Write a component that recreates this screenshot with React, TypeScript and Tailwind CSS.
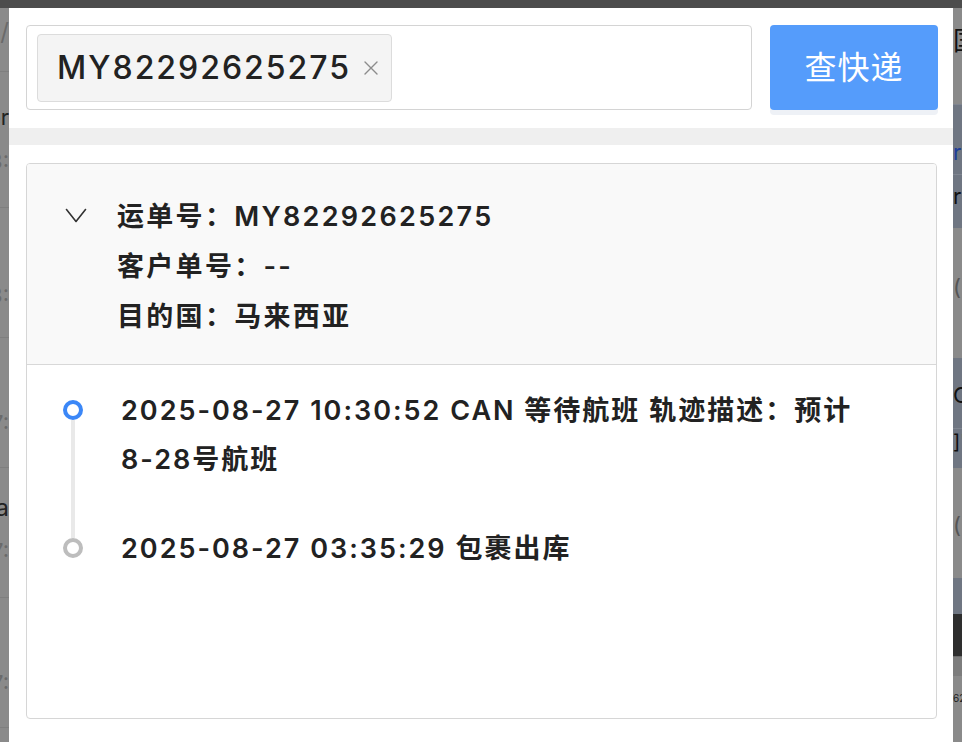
import React from "react";

function LeftStrip() {
  return (
    <div className="w-[9px] flex flex-col bg-[#8a8a8a] overflow-hidden">
      <div className="h-[64px] flex justify-end overflow-hidden border-b border-[#7f7f7f] pt-[12px]">
        <span className="text-[24px] leading-none text-[#6a6a6a] whitespace-nowrap">23/</span>
      </div>
      <div className="h-[136px] flex flex-col items-end overflow-hidden border-b border-[#7f7f7f]">
        <span className="mt-[34px] text-[22px] leading-none text-[#222] whitespace-nowrap">der</span>
        <span className="mt-[22px] text-[22px] leading-none text-[#6a6a6a] whitespace-nowrap">13:</span>
      </div>
      <div className="h-[130px] flex flex-col items-end overflow-hidden border-b border-[#7f7f7f]">
        <span className="mt-[76px] text-[22px] leading-none text-[#6a6a6a] whitespace-nowrap">13:</span>
      </div>
      <div className="h-[130px] flex flex-col items-end overflow-hidden border-b border-[#7f7f7f]">
        <span className="mt-[74px] text-[22px] leading-none text-[#6a6a6a] whitespace-nowrap">17:</span>
      </div>
      <div className="h-[130px] flex flex-col items-end overflow-hidden border-b border-[#7f7f7f]">
        <span className="mt-[28px] text-[24px] leading-none text-[#222] whitespace-nowrap">ia</span>
        <span className="mt-[20px] text-[22px] leading-none text-[#6a6a6a] whitespace-nowrap">17:</span>
      </div>
      <div className="h-[130px] flex flex-col items-end overflow-hidden border-b border-[#7f7f7f]">
        <span className="mt-[74px] text-[22px] leading-none text-[#6a6a6a] whitespace-nowrap">17:</span>
      </div>
    </div>
  );
}

function RightStrip() {
  return (
    <div className="w-[9px] flex flex-col overflow-hidden">
      <div className="h-[96px] bg-[#8a8a8a] pt-[20px]">
        <span className="text-[26px] leading-none text-[#111] whitespace-nowrap">国</span>
      </div>
      <div className="h-[70px] bg-[#6f7682] border-t border-[#7f8590] pt-[36px]">
        <span className="text-[22px] leading-none text-[#1d3d9a] whitespace-nowrap">r</span>
      </div>
      <div className="h-[54px] bg-[#6f7682] border-t border-[#7f8590] pt-[10px]">
        <span className="text-[22px] leading-none text-[#111] whitespace-nowrap">r</span>
      </div>
      <div className="h-[130px] bg-[#8a8a8a] pt-[48px]">
        <span className="text-[22px] leading-none text-[#555] whitespace-nowrap">(</span>
      </div>
      <div className="h-[70px] bg-[#6f7682] pt-[26px]">
        <span className="text-[22px] leading-none text-[#111] whitespace-nowrap">C</span>
      </div>
      <div className="h-[40px] bg-[#6f7682] border-t border-[#7f8590] pt-[2px]">
        <span className="text-[20px] leading-none text-[#111] whitespace-nowrap">]'</span>
      </div>
      <div className="h-[110px] bg-[#8a8a8a] pt-[46px]">
        <span className="text-[22px] leading-none text-[#555] whitespace-nowrap">(</span>
      </div>
      <div className="h-[36px] bg-[#6f7682]" />
      <div className="h-[42px] bg-[#2e2e2e]" />
      <div className="h-[20px] bg-[#7d7d7d] border-t border-[#6a6a6a]" />
      <div className="flex-1 bg-[#8a8a8a] pt-[8px]">
        <span className="text-[10px] leading-none text-[#222] whitespace-nowrap">62</span>
      </div>
    </div>
  );
}

function Chevron() {
  return (
    <svg width="22" height="16" viewBox="0 0 22 16" className="shrink-0">
      <path d="M1.5 1.5 L11 13.5 L20.5 1.5" fill="none" stroke="#333" strokeWidth="1.6" strokeLinecap="round" strokeLinejoin="round" />
    </svg>
  );
}

const events = [
  { text: "2025-08-27 10:30:52 CAN 等待航班 轨迹描述：预计8-28号航班", active: true },
  { text: "2025-08-27 03:35:29 包裹出库", active: false },
];

export default function App() {
  return (
    <div className="w-[962px] h-[742px] overflow-hidden flex flex-col bg-[#8a8a8a] font-['Inter','Noto_Sans_CJK_SC',sans-serif] text-[#222]">
      <div className="h-[8px] shrink-0 bg-[#4c4c4c]" />
      <div className="flex flex-1 min-h-0">
        <LeftStrip />
        <div className="w-[944px] bg-white flex flex-col">
          {/* search bar */}
          <div className="flex items-start pl-[17px] pr-[15px] pt-[17px] pb-[18px] gap-[18px]">
            <div className="flex-1 h-[85px] rounded-[4px] border-[1.5px] border-[#d4d4d4] flex items-center pl-[10px]">
              <div className="h-[68px] rounded-[4px] border border-[#dcdcdc] bg-[#f4f4f4] flex items-center pl-[19px] pr-[12px] gap-[12px]">
                <span className="text-[32px] font-medium tracking-[2px] leading-none">MY82292625275</span>
                <svg width="16" height="16" viewBox="0 0 16 16">
                  <path d="M2 2 L14 14 M14 2 L2 14" stroke="#8c8c8c" strokeWidth="1.4" strokeLinecap="round" />
                </svg>
              </div>
            </div>
            <div className="w-[168px] h-[85px] rounded-[4px] bg-[#559cfb] shadow-[0_5px_0_#eef1f6] flex items-center justify-center text-white text-[32px] tracking-[1px]">
              查快递
            </div>
          </div>
          <div className="h-[17px] bg-[#efefef]" />
          {/* result card */}
          <div className="pl-[17px] pr-[16px] pt-[18px]">
            <div className="h-[556px] rounded-[4px] border-[1.5px] border-[#d6d6d6] flex flex-col overflow-hidden">
              <div className="bg-[#f9f9f9] border-b-[1.5px] border-[#d8d8d8] flex pl-[38px] pt-[28px] pb-[22px]">
                <div className="pt-[16px]">
                  <Chevron />
                </div>
                <div className="ml-[30px] flex flex-col text-[27px] leading-[50px] font-semibold tracking-[2.3px]">
                  <div>运单号：MY82292625275</div>
                  <div>客户单号：--</div>
                  <div>目的国：马来西亚</div>
                </div>
              </div>
              <div className="flex flex-col pl-[36px] pt-[21px]">
                {events.map((e, i) => (
                  <div key={i} className="flex">
                    <div className="w-[20px] flex flex-col items-center shrink-0">
                      <div className={"h-[14px] w-[4px] " + (i > 0 ? "bg-[#e9e9e9]" : "")} />
                      <div
                        className={
                          "w-[20px] h-[20px] rounded-full border-[4px] bg-white " +
                          (e.active ? "border-[#3b87f7]" : "border-[#bdbdbd]")
                        }
                      />
                      <div className={"flex-1 w-[4px] " + (i < events.length - 1 ? "bg-[#e9e9e9]" : "")} />
                    </div>
                    <div className="ml-[38px] w-[742px] text-[27px] leading-[49px] font-semibold tracking-[2px] pb-[40px]">
                      {e.text}
                    </div>
                  </div>
                ))}
              </div>
            </div>
          </div>
        </div>
        <RightStrip />
      </div>
    </div>
  );
}
